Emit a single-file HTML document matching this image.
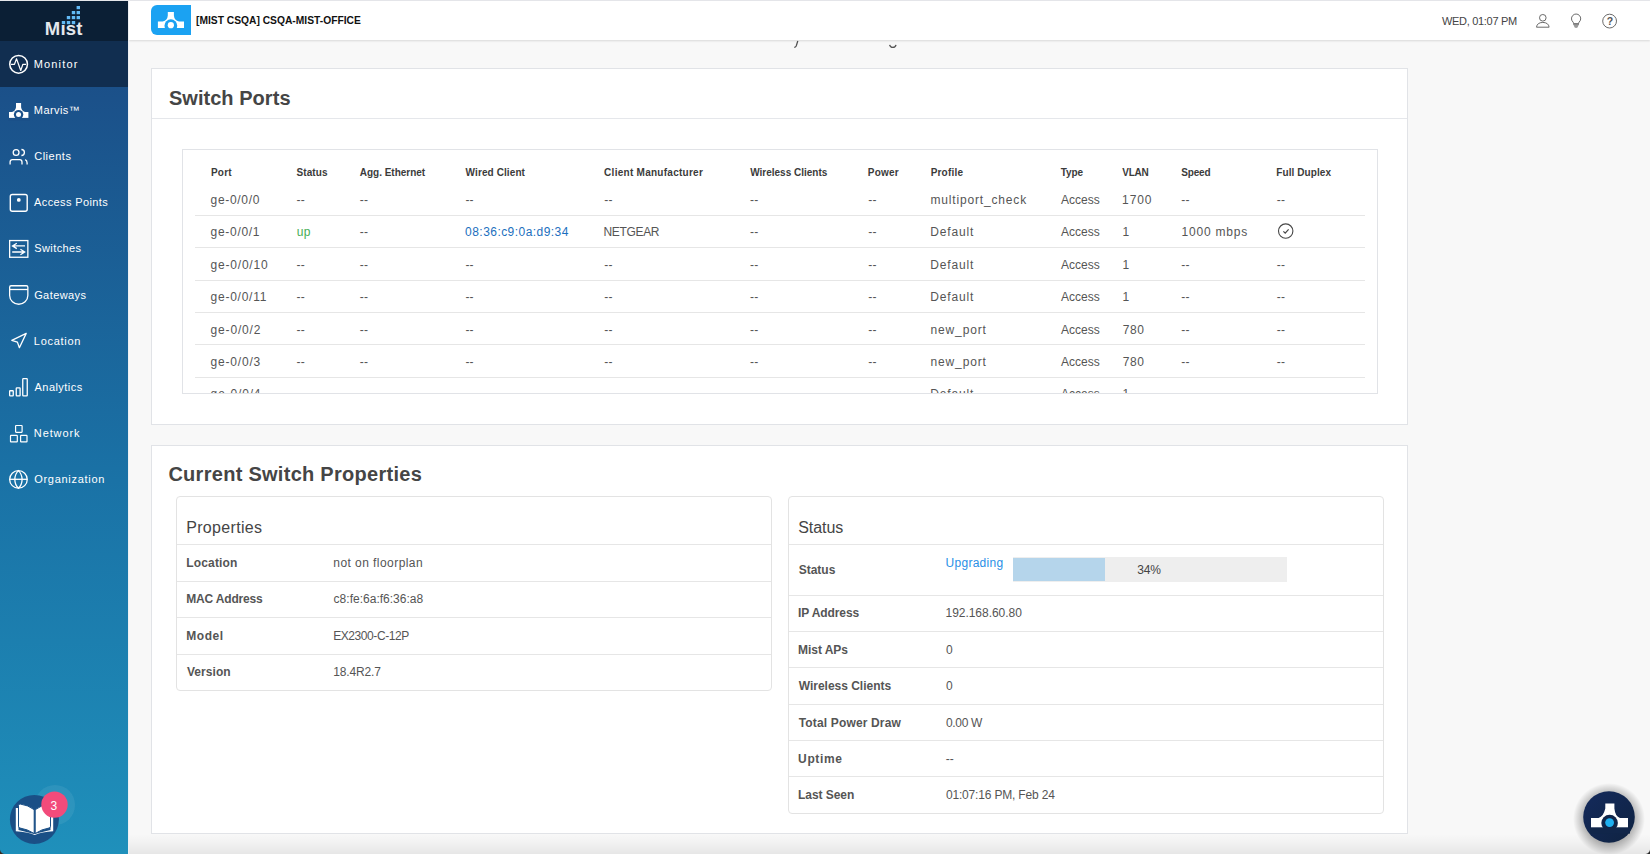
<!DOCTYPE html>
<html><head><meta charset="utf-8">
<style>
*{box-sizing:border-box;margin:0;padding:0}
html,body{width:1650px;height:854px;overflow:hidden}
body{position:relative;background:#f8f8f8;font-family:"Liberation Sans",sans-serif;color:#555}
.a{position:absolute}
.t{position:absolute;white-space:nowrap;line-height:1}
.hl{position:absolute;height:1px}
</style></head>
<body>
<div class="a" style="left:128px;top:834px;width:1522px;height:20px;background:linear-gradient(180deg,rgba(0,0,0,0) 0%,rgba(0,0,0,.025) 40%,rgba(0,0,0,.07) 100%)"></div>
<div class="a" style="left:0;top:0;width:1650px;height:1px;background:#e6e7eb"></div>
<svg class="a" style="left:780px;top:38px" width="130" height="14" viewBox="780 38 130 14" fill="none" stroke="#555" stroke-width="1.3"><path d="M797.8,41 L796.2,46 Q795.6,47.4 794.2,47.4"/><path d="M889.6,44.8 Q890.3,47.4 892.8,47.4 Q895.5,47.4 896,44.8"/></svg>
<div class="a" style="left:129px;top:1px;width:1521px;height:39px;background:#fff;box-shadow:0 1px 2px rgba(0,0,0,.13)"></div>
<svg class="a" style="left:151px;top:5px" width="40" height="30" viewBox="0 0 40 30">
<path d="M6,0 H40 V30 H6 A6,6 0 0 1 0,24 V6 A6,6 0 0 1 6,0 Z" fill="#1ba2f2"/>
<path d="M16.8,6.9 H22.9 V10.6 Q23.3,15.6 28,16.6 H33 V23.1 H6.9 V16.6 H11.7 Q16.4,15.6 16.8,10.6 Z" fill="#fff"/>
<circle cx="19.85" cy="20.7" r="6.4" fill="#1ba2f2"/>
<rect x="6" y="23.1" width="28" height="5" fill="#1ba2f2"/>
<circle cx="19.85" cy="20.2" r="3.1" fill="#fff"/>
</svg>
<div class="t" style="left:196.24px;top:15.21px;font-size:11.8px;font-weight:bold;color:#111;transform:scaleX(0.8700);transform-origin:0 0;">[MIST CSQA] CSQA-MIST-OFFICE</div>
<div class="t" style="left:1442.04px;top:15.69px;font-size:11px;color:#444;letter-spacing:-0.315px;">WED, 01:07 PM</div>
<svg class="a" style="left:1530px;top:8px" width="95" height="26" viewBox="1530 8 95 26" fill="none" stroke="#6a6a6a" stroke-width="1">
<circle cx="1542.8" cy="17.8" r="3.3"/>
<path d="M1536.5,27.2 Q1537,22.6 1542.8,22.4 Q1548.6,22.6 1549.1,27.2 Z"/>
<path d="M1573.5,23.4 L1573.2,22.2 A4.6,4.6 0 1 1 1579,22.2 L1578.7,23.4"/>
<path d="M1573.2,23.3 H1579 V24.3 L1577.5,27.5 Q1576.1,28.3 1574.7,27.5 L1573.2,24.3 Z" fill="#9a9a9a" stroke="none"/>
<path d="M1573.2,23.8 H1579" stroke="#6a6a6a"/>
<circle cx="1609.6" cy="21.1" r="6.9"/>
</svg>
<div class="t" style="left:1606.63px;top:16.11px;font-size:10.5px;font-weight:bold;color:#555;letter-spacing:0.000px;">?</div>
<div class="a" style="left:0;top:1px;width:128px;height:853px;background:linear-gradient(180deg,#1a4c85 0px,#1b5089 86px,#1a72a6 480px,#1f90bb 853px)"></div>
<div class="a" style="left:0;top:1px;width:128px;height:40px;background:#0b1f35"></div>
<div class="a" style="left:0;top:41px;width:128px;height:46px;background:#112e50"></div>
<div class="a" style="left:128px;top:1px;width:1px;height:853px;background:#eef0f3"></div>
<svg class="a" style="left:0;top:0" width="128" height="40" viewBox="0 0 128 40"><rect x="76.6" y="6.0" width="3.4" height="3.2" fill="#62baf6"/><rect x="71.8" y="11.0" width="3.4" height="3.2" fill="#62baf6"/><rect x="76.6" y="11.0" width="3.4" height="3.2" fill="#62baf6"/><rect x="66.8" y="16.0" width="3.4" height="3.2" fill="#62baf6"/><rect x="71.8" y="16.0" width="3.4" height="3.2" fill="#62baf6"/><rect x="76.6" y="16.0" width="3.4" height="3.2" fill="#62baf6"/><rect x="61.8" y="21.0" width="3.4" height="3.2" fill="#62baf6"/><rect x="66.8" y="21.0" width="3.4" height="3.2" fill="#62baf6"/><rect x="71.8" y="21.0" width="3.4" height="3.2" fill="#62baf6"/></svg>
<div class="t" style="left:44.80px;top:20.04px;font-size:18.5px;font-weight:bold;color:#e3e7ec;letter-spacing:0.193px;">Mıst</div>
<div class="t" style="left:33.82px;top:58.69px;font-size:11px;color:#ffffff;letter-spacing:1.136px;">Monitor</div>
<div class="t" style="left:33.87px;top:104.86px;font-size:11px;color:#ffffff;letter-spacing:0.408px;">Marvis™</div>
<div class="t" style="left:34.20px;top:151.03px;font-size:11px;color:#ffffff;letter-spacing:0.513px;">Clients</div>
<div class="t" style="left:34.10px;top:197.20px;font-size:11px;color:#ffffff;letter-spacing:0.375px;">Access Points</div>
<div class="t" style="left:34.21px;top:243.37px;font-size:11px;color:#ffffff;letter-spacing:0.411px;">Switches</div>
<div class="t" style="left:34.15px;top:289.54px;font-size:11px;color:#ffffff;letter-spacing:0.420px;">Gateways</div>
<div class="t" style="left:33.82px;top:335.71px;font-size:11px;color:#ffffff;letter-spacing:0.716px;">Location</div>
<div class="t" style="left:34.50px;top:381.88px;font-size:11px;color:#ffffff;letter-spacing:0.461px;">Analytics</div>
<div class="t" style="left:33.82px;top:428.05px;font-size:11px;color:#ffffff;letter-spacing:0.885px;">Network</div>
<div class="t" style="left:34.21px;top:474.22px;font-size:11px;color:#ffffff;letter-spacing:0.713px;">Organization</div>
<svg class="a" style="left:0;top:0" width="128" height="500" viewBox="0 0 128 500" fill="none" stroke="#fff">
<circle cx="18.6" cy="64.3" r="8.85" stroke-width="1.5"/>
<path d="M10.9,64.3 H14.5 L16.5,58.7 L20.75,70.5 L22.9,64.3 H26.1" stroke-width="1.2" stroke-linejoin="round"/>
<path d="M16,102.9 H21.1 V107.3 Q21.5,110.8 25,112 H28.4 V117.9 H9 V112 H12.1 Q15.6,110.8 16,107.3 Z" fill="#fff" stroke="none"/>
<circle cx="18.56" cy="114.6" r="4.7" fill="#1b5089" stroke="none"/>
<rect x="8" y="117.9" width="22" height="3" fill="#1b5089" stroke="none"/>
<circle cx="18.56" cy="114.4" r="2.5" fill="#fff" stroke="none"/>
<circle cx="16.1" cy="152.5" r="2.9" stroke-width="1.3"/>
<path d="M21.4,149.5 A3,3 0 0 1 21.4,155.5" stroke-width="1.3"/>
<path d="M10.1,164.5 V162 Q10.1,159.7 12.4,159.7 H19.7 Q22,159.7 22,162 V164.5" stroke-width="1.3"/>
<path d="M25.2,159.6 Q27.1,160.6 27.1,163 V164.5" stroke-width="1.3"/>
<rect x="10.3" y="194.5" width="16.9" height="16.7" rx="2" stroke-width="1.4"/>
<circle cx="18.8" cy="199.9" r="1.9" fill="#fff" stroke="none"/>
<rect x="9.65" y="240.55" width="18.2" height="16.7" stroke-width="1.3"/>
<path d="M25,245.9 H12.5 M16.8,243.3 L12.5,245.9 L16.8,248.6" stroke-width="1.3"/>
<path d="M12.2,252 H24.7 M20.4,249.3 L24.7,252 L20.4,254.8" stroke-width="1.3"/>
<path d="M9.65,287.2 Q9.65,285.75 11.1,285.75 H26.4 Q27.85,285.75 27.85,287.2 V295.5 C27.85,300.5 23.5,304.25 18.75,304.25 C14,304.25 9.65,300.5 9.65,295.5 Z" stroke-width="1.3"/>
<path d="M9.65,289.5 H27.85" stroke-width="1.3"/>
<path d="M26.2,333.4 L11.8,340.3 L17.4,342.1 L19.4,347.7 Z" stroke-width="1.3" stroke-linejoin="round"/>
<rect x="9.65" y="390.75" width="3.6" height="5.2" rx="0.6" stroke-width="1.3"/>
<rect x="16.25" y="387.95" width="3.85" height="8" rx="0.6" stroke-width="1.3"/>
<rect x="22.75" y="378.55" width="4.5" height="17.4" rx="0.6" stroke-width="1.3"/>
<rect x="15.6" y="425.5" width="6.5" height="6.8" rx="0.5" stroke-width="1.2"/>
<rect x="10.5" y="435.4" width="6.8" height="6.5" rx="0.5" stroke-width="1.2"/>
<rect x="20.6" y="435.4" width="6.4" height="6.5" rx="0.5" stroke-width="1.2"/>
<circle cx="18.45" cy="479.4" r="8.8" stroke-width="1.3"/>
<path d="M9.65,479.3 H27.25" stroke-width="1.3"/>
<path d="M18.45,470.6 A12.5,12.5 0 0 0 18.45,488.2 A12.5,12.5 0 0 0 18.45,470.6 Z" stroke-width="1.3"/>
</svg>
<svg class="a" style="left:0;top:770px" width="128" height="84" viewBox="0 770 128 84">
<circle cx="55" cy="805" r="20" fill="rgba(255,255,255,0.07)"/>
<circle cx="34.4" cy="819.4" r="24.5" fill="#1a4f86"/>
<path d="M15.8,808 H18.5 V830 L34.2,834 L50.5,830 V808 H53.2 V831.2 Q42,831.8 34.7,835 Q27,831.8 15.8,831.2 Z" fill="#fff"/>
<path d="M18.5,805.5 Q18.5,803.9 20.2,804 Q28,805 34.2,809.7 V833.5 Q27,829 20,828 Q18.5,827.8 18.5,826.3 Z" fill="#fff" stroke="#1a4f86" stroke-width="1"/>
<path d="M35.2,809.7 Q41.5,805 49,804 Q50.5,803.9 50.5,805.5 V826.3 Q50.5,827.8 49,828 Q42,829 35.2,833.5 Z" fill="#fff" stroke="#1a4f86" stroke-width="1"/>
<circle cx="54.5" cy="804.6" r="13.2" fill="#f24b7b"/>
</svg>
<div class="t" style="left:50.42px;top:799.84px;font-size:12px;color:#fff;">3</div>
<div class="a" style="left:0;top:849px;width:5px;height:5px;background:radial-gradient(circle at 5px 0px,rgba(0,0,0,0) 4.5px,#3a2a20 5.5px)"></div>
<div class="a" style="left:151px;top:68px;width:1257px;height:357px;background:#fff;border:1px solid #e1e3e7"></div>
<div class="t" style="left:168.90px;top:87.67px;font-size:20px;font-weight:bold;color:#454545;letter-spacing:0.045px;">Switch Ports</div>
<div class="hl" style="left:152px;top:118px;width:1255px;background:#e5e7eb"></div>
<div class="a" style="left:182px;top:149px;width:1196px;height:245px;border:1px solid #e1e3e7;overflow:hidden">
<div class="t" style="left:27.95px;top:18.23px;font-size:10px;font-weight:bold;color:#3b3b3b;letter-spacing:0.233px;">Port</div>
<div class="t" style="left:113.40px;top:18.23px;font-size:10px;font-weight:bold;color:#3b3b3b;letter-spacing:0.130px;">Status</div>
<div class="t" style="left:176.75px;top:18.23px;font-size:10px;font-weight:bold;color:#3b3b3b;letter-spacing:-0.017px;">Agg. Ethernet</div>
<div class="t" style="left:282.60px;top:18.23px;font-size:10px;font-weight:bold;color:#3b3b3b;letter-spacing:0.100px;">Wired Client</div>
<div class="t" style="left:421.10px;top:18.23px;font-size:10px;font-weight:bold;color:#3b3b3b;letter-spacing:0.269px;">Client Manufacturer</div>
<div class="t" style="left:567.20px;top:18.23px;font-size:10px;font-weight:bold;color:#3b3b3b;letter-spacing:-0.003px;">Wireless Clients</div>
<div class="t" style="left:684.75px;top:18.23px;font-size:10px;font-weight:bold;color:#3b3b3b;letter-spacing:0.225px;">Power</div>
<div class="t" style="left:747.65px;top:18.23px;font-size:10px;font-weight:bold;color:#3b3b3b;letter-spacing:0.200px;">Profile</div>
<div class="t" style="left:877.80px;top:18.23px;font-size:10px;font-weight:bold;color:#3b3b3b;letter-spacing:-0.150px;">Type</div>
<div class="t" style="left:939.35px;top:18.23px;font-size:10px;font-weight:bold;color:#3b3b3b;letter-spacing:-0.267px;">VLAN</div>
<div class="t" style="left:998.20px;top:18.23px;font-size:10px;font-weight:bold;color:#3b3b3b;letter-spacing:-0.138px;">Speed</div>
<div class="t" style="left:1093.25px;top:18.23px;font-size:10px;font-weight:bold;color:#3b3b3b;letter-spacing:0.080px;">Full Duplex</div>
<div class="t" style="left:27.62px;top:43.84px;font-size:12px;color:#555;letter-spacing:0.680px;">ge-0/0/0</div>
<div class="t" style="left:113.56px;top:43.84px;font-size:12px;color:#555;letter-spacing:0.140px;">--</div>
<div class="t" style="left:176.86px;top:43.84px;font-size:12px;color:#555;letter-spacing:0.140px;">--</div>
<div class="t" style="left:282.46px;top:43.84px;font-size:12px;color:#555;letter-spacing:0.140px;">--</div>
<div class="t" style="left:421.36px;top:43.84px;font-size:12px;color:#555;letter-spacing:0.140px;">--</div>
<div class="t" style="left:567.06px;top:43.84px;font-size:12px;color:#555;letter-spacing:0.140px;">--</div>
<div class="t" style="left:685.26px;top:43.84px;font-size:12px;color:#555;letter-spacing:0.140px;">--</div>
<div class="t" style="left:747.52px;top:43.84px;font-size:12px;color:#555;letter-spacing:0.830px;">multiport_check</div>
<div class="t" style="left:877.90px;top:43.84px;font-size:12px;color:#555;letter-spacing:0.044px;">Access</div>
<div class="t" style="left:939.10px;top:43.84px;font-size:12px;color:#555;letter-spacing:0.907px;">1700</div>
<div class="t" style="left:998.36px;top:43.84px;font-size:12px;color:#555;letter-spacing:0.140px;">--</div>
<div class="t" style="left:1093.76px;top:43.84px;font-size:12px;color:#555;letter-spacing:0.140px;">--</div>
<div class="hl" style="left:11.5px;top:65.00px;width:1170px;background:#e6e6e6"></div>
<div class="t" style="left:27.62px;top:76.26px;font-size:12px;color:#555;letter-spacing:0.697px;">ge-0/0/1</div>
<div class="t" style="left:113.72px;top:76.26px;font-size:12px;color:#46ae55;letter-spacing:0.440px;">up</div>
<div class="t" style="left:176.86px;top:76.26px;font-size:12px;color:#555;letter-spacing:0.140px;">--</div>
<div class="t" style="left:282.12px;top:76.26px;font-size:12px;color:#1b6fbe;letter-spacing:0.449px;">08:36:c9:0a:d9:34</div>
<div class="t" style="left:420.54px;top:76.26px;font-size:12px;color:#555;letter-spacing:-0.343px;">NETGEAR</div>
<div class="t" style="left:567.06px;top:76.26px;font-size:12px;color:#555;letter-spacing:0.140px;">--</div>
<div class="t" style="left:685.26px;top:76.26px;font-size:12px;color:#555;letter-spacing:0.140px;">--</div>
<div class="t" style="left:747.34px;top:76.26px;font-size:12px;color:#555;letter-spacing:0.840px;">Default</div>
<div class="t" style="left:877.90px;top:76.26px;font-size:12px;color:#555;letter-spacing:0.044px;">Access</div>
<div class="t" style="left:939.50px;top:76.26px;font-size:12px;color:#555;letter-spacing:0.000px;">1</div>
<div class="t" style="left:998.50px;top:76.26px;font-size:12px;color:#555;letter-spacing:0.790px;">1000 mbps</div>
<svg class="a" style="left:1094px;top:73px" width="18" height="18" viewBox="1277 223 18 18" fill="none" stroke="#474747"><circle cx="1285.7" cy="231.1" r="7.2" stroke-width="1.1"/><path d="M1283.4,231.3 L1285.2,233.1 L1288.6,229.3" stroke-width="1.2"/></svg>
<div class="hl" style="left:11.5px;top:97.00px;width:1170px;background:#e6e6e6"></div>
<div class="t" style="left:27.62px;top:108.68px;font-size:12px;color:#555;letter-spacing:0.787px;">ge-0/0/10</div>
<div class="t" style="left:113.56px;top:108.68px;font-size:12px;color:#555;letter-spacing:0.140px;">--</div>
<div class="t" style="left:176.86px;top:108.68px;font-size:12px;color:#555;letter-spacing:0.140px;">--</div>
<div class="t" style="left:282.46px;top:108.68px;font-size:12px;color:#555;letter-spacing:0.140px;">--</div>
<div class="t" style="left:421.36px;top:108.68px;font-size:12px;color:#555;letter-spacing:0.140px;">--</div>
<div class="t" style="left:567.06px;top:108.68px;font-size:12px;color:#555;letter-spacing:0.140px;">--</div>
<div class="t" style="left:685.26px;top:108.68px;font-size:12px;color:#555;letter-spacing:0.140px;">--</div>
<div class="t" style="left:747.34px;top:108.68px;font-size:12px;color:#555;letter-spacing:0.840px;">Default</div>
<div class="t" style="left:877.90px;top:108.68px;font-size:12px;color:#555;letter-spacing:0.044px;">Access</div>
<div class="t" style="left:939.50px;top:108.68px;font-size:12px;color:#555;letter-spacing:0.000px;">1</div>
<div class="t" style="left:998.36px;top:108.68px;font-size:12px;color:#555;letter-spacing:0.140px;">--</div>
<div class="t" style="left:1093.76px;top:108.68px;font-size:12px;color:#555;letter-spacing:0.140px;">--</div>
<div class="hl" style="left:11.5px;top:129.50px;width:1170px;background:#e6e6e6"></div>
<div class="t" style="left:27.62px;top:141.10px;font-size:12px;color:#555;letter-spacing:0.740px;">ge-0/0/11</div>
<div class="t" style="left:113.56px;top:141.10px;font-size:12px;color:#555;letter-spacing:0.140px;">--</div>
<div class="t" style="left:176.86px;top:141.10px;font-size:12px;color:#555;letter-spacing:0.140px;">--</div>
<div class="t" style="left:282.46px;top:141.10px;font-size:12px;color:#555;letter-spacing:0.140px;">--</div>
<div class="t" style="left:421.36px;top:141.10px;font-size:12px;color:#555;letter-spacing:0.140px;">--</div>
<div class="t" style="left:567.06px;top:141.10px;font-size:12px;color:#555;letter-spacing:0.140px;">--</div>
<div class="t" style="left:685.26px;top:141.10px;font-size:12px;color:#555;letter-spacing:0.140px;">--</div>
<div class="t" style="left:747.34px;top:141.10px;font-size:12px;color:#555;letter-spacing:0.840px;">Default</div>
<div class="t" style="left:877.90px;top:141.10px;font-size:12px;color:#555;letter-spacing:0.044px;">Access</div>
<div class="t" style="left:939.50px;top:141.10px;font-size:12px;color:#555;letter-spacing:0.000px;">1</div>
<div class="t" style="left:998.36px;top:141.10px;font-size:12px;color:#555;letter-spacing:0.140px;">--</div>
<div class="t" style="left:1093.76px;top:141.10px;font-size:12px;color:#555;letter-spacing:0.140px;">--</div>
<div class="hl" style="left:11.5px;top:162.00px;width:1170px;background:#e6e6e6"></div>
<div class="t" style="left:27.62px;top:173.52px;font-size:12px;color:#555;letter-spacing:0.820px;">ge-0/0/2</div>
<div class="t" style="left:113.56px;top:173.52px;font-size:12px;color:#555;letter-spacing:0.140px;">--</div>
<div class="t" style="left:176.86px;top:173.52px;font-size:12px;color:#555;letter-spacing:0.140px;">--</div>
<div class="t" style="left:282.46px;top:173.52px;font-size:12px;color:#555;letter-spacing:0.140px;">--</div>
<div class="t" style="left:421.36px;top:173.52px;font-size:12px;color:#555;letter-spacing:0.140px;">--</div>
<div class="t" style="left:567.06px;top:173.52px;font-size:12px;color:#555;letter-spacing:0.140px;">--</div>
<div class="t" style="left:685.26px;top:173.52px;font-size:12px;color:#555;letter-spacing:0.140px;">--</div>
<div class="t" style="left:747.52px;top:173.52px;font-size:12px;color:#555;letter-spacing:0.860px;">new_port</div>
<div class="t" style="left:877.90px;top:173.52px;font-size:12px;color:#555;letter-spacing:0.044px;">Access</div>
<div class="t" style="left:939.70px;top:173.52px;font-size:12px;color:#555;letter-spacing:0.620px;">780</div>
<div class="t" style="left:998.36px;top:173.52px;font-size:12px;color:#555;letter-spacing:0.140px;">--</div>
<div class="t" style="left:1093.76px;top:173.52px;font-size:12px;color:#555;letter-spacing:0.140px;">--</div>
<div class="hl" style="left:11.5px;top:194.00px;width:1170px;background:#e6e6e6"></div>
<div class="t" style="left:27.62px;top:205.94px;font-size:12px;color:#555;letter-spacing:0.803px;">ge-0/0/3</div>
<div class="t" style="left:113.56px;top:205.94px;font-size:12px;color:#555;letter-spacing:0.140px;">--</div>
<div class="t" style="left:176.86px;top:205.94px;font-size:12px;color:#555;letter-spacing:0.140px;">--</div>
<div class="t" style="left:282.46px;top:205.94px;font-size:12px;color:#555;letter-spacing:0.140px;">--</div>
<div class="t" style="left:421.36px;top:205.94px;font-size:12px;color:#555;letter-spacing:0.140px;">--</div>
<div class="t" style="left:567.06px;top:205.94px;font-size:12px;color:#555;letter-spacing:0.140px;">--</div>
<div class="t" style="left:685.26px;top:205.94px;font-size:12px;color:#555;letter-spacing:0.140px;">--</div>
<div class="t" style="left:747.52px;top:205.94px;font-size:12px;color:#555;letter-spacing:0.860px;">new_port</div>
<div class="t" style="left:877.90px;top:205.94px;font-size:12px;color:#555;letter-spacing:0.044px;">Access</div>
<div class="t" style="left:939.70px;top:205.94px;font-size:12px;color:#555;letter-spacing:0.620px;">780</div>
<div class="t" style="left:998.36px;top:205.94px;font-size:12px;color:#555;letter-spacing:0.140px;">--</div>
<div class="t" style="left:1093.76px;top:205.94px;font-size:12px;color:#555;letter-spacing:0.140px;">--</div>
<div class="hl" style="left:11.5px;top:227.00px;width:1170px;background:#e6e6e6"></div>
<div class="t" style="left:27.62px;top:238.36px;font-size:12px;color:#555;letter-spacing:0.843px;">ge-0/0/4</div>
<div class="t" style="left:113.56px;top:238.36px;font-size:12px;color:#555;letter-spacing:0.140px;">--</div>
<div class="t" style="left:176.86px;top:238.36px;font-size:12px;color:#555;letter-spacing:0.140px;">--</div>
<div class="t" style="left:282.46px;top:238.36px;font-size:12px;color:#555;letter-spacing:0.140px;">--</div>
<div class="t" style="left:421.36px;top:238.36px;font-size:12px;color:#555;letter-spacing:0.140px;">--</div>
<div class="t" style="left:567.06px;top:238.36px;font-size:12px;color:#555;letter-spacing:0.140px;">--</div>
<div class="t" style="left:685.26px;top:238.36px;font-size:12px;color:#555;letter-spacing:0.140px;">--</div>
<div class="t" style="left:747.34px;top:238.36px;font-size:12px;color:#555;letter-spacing:0.840px;">Default</div>
<div class="t" style="left:877.90px;top:238.36px;font-size:12px;color:#555;letter-spacing:0.044px;">Access</div>
<div class="t" style="left:939.50px;top:238.36px;font-size:12px;color:#555;letter-spacing:0.000px;">1</div>
<div class="t" style="left:998.36px;top:238.36px;font-size:12px;color:#555;letter-spacing:0.140px;">--</div>
<div class="t" style="left:1093.76px;top:238.36px;font-size:12px;color:#555;letter-spacing:0.140px;">--</div>
</div>
<div class="a" style="left:151px;top:445px;width:1257px;height:389px;background:#fff;border:1px solid #e1e3e7"></div>
<div class="t" style="left:168.40px;top:463.57px;font-size:20px;font-weight:bold;color:#454545;letter-spacing:0.279px;">Current Switch Properties</div>
<div class="a" style="left:176px;top:496px;width:596px;height:195px;border:1px solid #e3e3e3;border-radius:4px;background:#fff"></div>
<div class="hl" style="left:177px;top:544.4px;width:594px;background:#e6e6e6"></div>
<div class="hl" style="left:177px;top:581.0px;width:594px;background:#e6e6e6"></div>
<div class="hl" style="left:177px;top:617.4px;width:594px;background:#e6e6e6"></div>
<div class="hl" style="left:177px;top:654.0px;width:594px;background:#e6e6e6"></div>
<div class="t" style="left:186.22px;top:557.04px;font-size:12px;font-weight:bold;color:#555;letter-spacing:0.174px;">Location</div>
<div class="t" style="left:333.32px;top:557.04px;font-size:12px;color:#555;letter-spacing:0.441px;">not on floorplan</div>
<div class="t" style="left:186.22px;top:593.49px;font-size:12px;font-weight:bold;color:#555;letter-spacing:-0.168px;">MAC Address</div>
<div class="t" style="left:333.62px;top:593.49px;font-size:12px;color:#555;letter-spacing:0.010px;">c8:fe:6a:f6:36:a8</div>
<div class="t" style="left:186.22px;top:629.94px;font-size:12px;font-weight:bold;color:#555;letter-spacing:0.560px;">Model</div>
<div class="t" style="left:333.14px;top:629.94px;font-size:12px;color:#555;letter-spacing:-0.413px;">EX2300-C-12P</div>
<div class="t" style="left:186.94px;top:666.39px;font-size:12px;font-weight:bold;color:#555;letter-spacing:0.060px;">Version</div>
<div class="t" style="left:333.20px;top:666.39px;font-size:12px;color:#555;letter-spacing:-0.146px;">18.4R2.7</div>
<div class="a" style="left:788px;top:496px;width:596px;height:318px;border:1px solid #e3e3e3;border-radius:4px;background:#fff"></div>
<div class="t" style="left:798.28px;top:520.46px;font-size:16px;color:#454545;letter-spacing:-0.076px;">Status</div>
<div class="hl" style="left:789px;top:544.0px;width:594px;background:#e6e6e6"></div>
<div class="hl" style="left:789px;top:595.0px;width:594px;background:#e6e6e6"></div>
<div class="hl" style="left:789px;top:631.0px;width:594px;background:#e6e6e6"></div>
<div class="hl" style="left:789px;top:667.0px;width:594px;background:#e6e6e6"></div>
<div class="hl" style="left:789px;top:704.0px;width:594px;background:#e6e6e6"></div>
<div class="hl" style="left:789px;top:740.0px;width:594px;background:#e6e6e6"></div>
<div class="hl" style="left:789px;top:776.0px;width:594px;background:#e6e6e6"></div>
<div class="t" style="left:798.64px;top:564.24px;font-size:12px;font-weight:bold;color:#555;letter-spacing:0.016px;">Status</div>
<div class="t" style="left:945.50px;top:557.24px;font-size:12px;color:#2a8fe6;letter-spacing:0.288px;">Upgrading</div>
<div class="a" style="left:1013px;top:557px;width:274px;height:25px;background:#eeeeee"></div>
<div class="a" style="left:1013px;top:558px;width:92px;height:23px;background:#b5d5eb"></div>
<div class="t" style="left:1137.32px;top:564.44px;font-size:12px;color:#444;letter-spacing:-0.250px;">34%</div>
<div class="t" style="left:798.02px;top:607.14px;font-size:12px;font-weight:bold;color:#555;letter-spacing:-0.098px;">IP Address</div>
<div class="t" style="left:945.50px;top:607.14px;font-size:12px;color:#555;letter-spacing:-0.035px;">192.168.60.80</div>
<div class="t" style="left:798.02px;top:643.84px;font-size:12px;font-weight:bold;color:#555;letter-spacing:-0.037px;">Mist APs</div>
<div class="t" style="left:945.92px;top:643.84px;font-size:12px;color:#555;">0</div>
<div class="t" style="left:798.80px;top:680.14px;font-size:12px;font-weight:bold;color:#555;letter-spacing:-0.020px;">Wireless Clients</div>
<div class="t" style="left:945.92px;top:680.14px;font-size:12px;color:#555;">0</div>
<div class="t" style="left:798.68px;top:716.54px;font-size:12px;font-weight:bold;color:#555;letter-spacing:0.159px;">Total Power Draw</div>
<div class="t" style="left:945.92px;top:716.54px;font-size:12px;color:#555;letter-spacing:-0.300px;">0.00 W</div>
<div class="t" style="left:798.08px;top:752.84px;font-size:12px;font-weight:bold;color:#555;letter-spacing:0.632px;">Uptime</div>
<div class="t" style="left:945.86px;top:752.84px;font-size:12px;color:#555;">--</div>
<div class="t" style="left:798.02px;top:789.14px;font-size:12px;font-weight:bold;color:#555;letter-spacing:-0.062px;">Last Seen</div>
<div class="t" style="left:945.92px;top:789.14px;font-size:12px;color:#555;letter-spacing:-0.174px;">01:07:16 PM, Feb 24</div>
<div class="t" style="left:186.22px;top:520.46px;font-size:16px;color:#454545;letter-spacing:0.320px;">Properties</div>
<svg class="a" style="left:1560px;top:770px" width="90" height="84" viewBox="1560 770 90 84">
<defs><radialGradient id="sh" cx="50%" cy="50%" r="50%"><stop offset="66%" stop-color="rgba(0,0,0,0.30)"/><stop offset="100%" stop-color="rgba(0,0,0,0)"/></radialGradient>
<linearGradient id="mg" x1="0" y1="0" x2="1" y2="1"><stop offset="0" stop-color="#142a5c"/><stop offset="1" stop-color="#0f2341"/></linearGradient></defs>
<circle cx="1609" cy="819" r="36" fill="url(#sh)"/>
<circle cx="1609" cy="817" r="25.8" fill="url(#mg)"/>
<path d="M1605.3,803.6 H1614.4 V808.5 Q1615.2,816.5 1620,818 H1628 V827.6 H1591 V818 H1598.6 Q1603.4,816.5 1605.3,808.5 Z" fill="#fff"/>
<circle cx="1609.6" cy="823" r="8.3" fill="#11264a"/>
<rect x="1590" y="827.6" width="40" height="6" fill="#11264a"/>
<circle cx="1609.6" cy="822.6" r="4.4" fill="#1fb0f0"/>
</svg>
<div class="a" style="left:1645px;top:849px;width:5px;height:5px;background:radial-gradient(circle at 0px 0px,rgba(0,0,0,0) 4.5px,#2a2a2a 5.5px)"></div>
</body></html>
